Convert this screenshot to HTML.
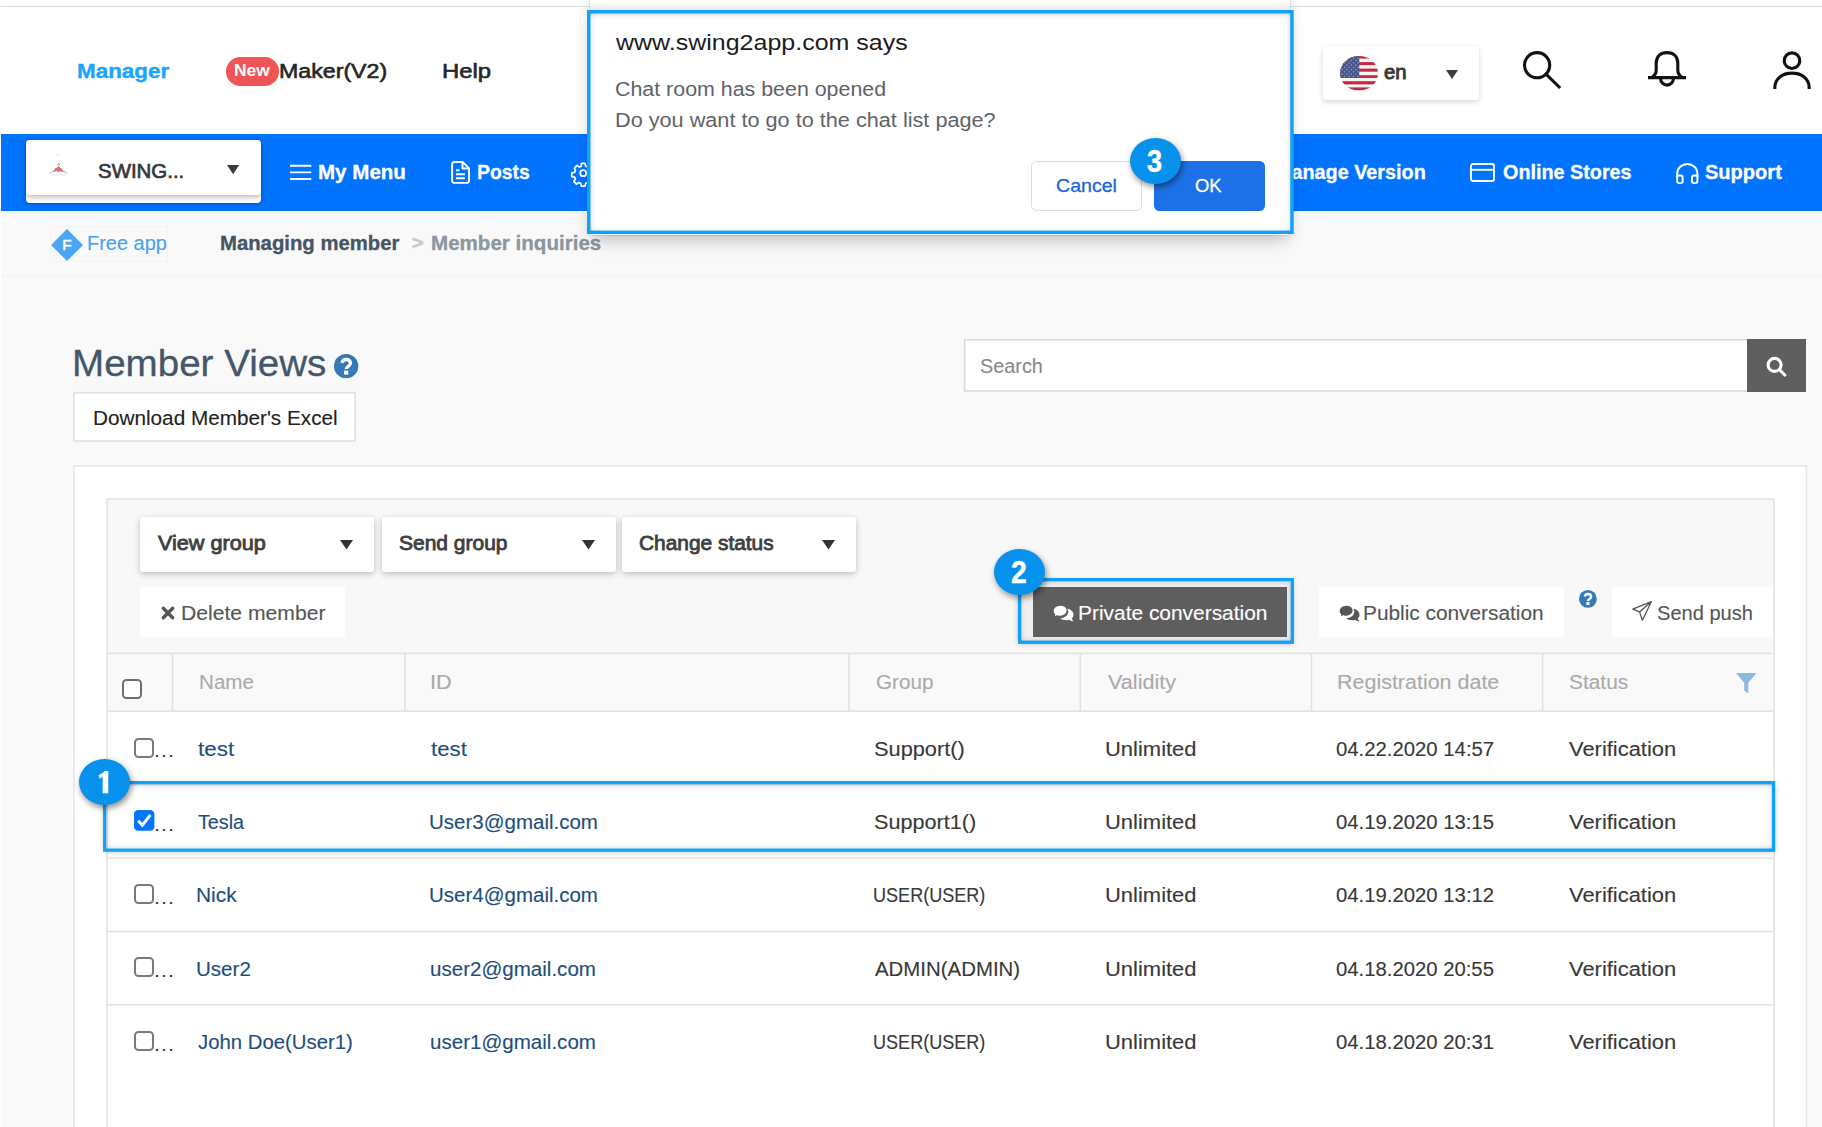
<!DOCTYPE html>
<html lang="en"><head><meta charset="utf-8"><title>Member Views</title>
<style>
html,body{margin:0;padding:0;}
html,body{width:1822px;height:1127px;overflow:hidden;background:#fff;}
body{position:relative;font-family:"Liberation Sans",sans-serif;}
.root{position:absolute;left:0;top:0;width:1822px;height:1127px;overflow:hidden;background:#fff;}
.t{position:absolute;white-space:nowrap;line-height:1;font-family:"Liberation Sans",sans-serif;}
.b{position:absolute;box-sizing:border-box;}
svg{position:absolute;overflow:visible;}
.sel{background:#fff;border-radius:3px;box-shadow:0 2px 6px rgba(0,0,0,.24);}
.badge{position:absolute;border-radius:50%;background:#0692ec;box-shadow:1.5px 3px 6px rgba(0,0,0,.45);}
</style></head><body><div class="root">
<div class="b" style="left:1px;top:6px;width:1821px;height:1px;background:#d8dee3;"></div>
<span class="t" style="left:77.04px;top:60.22px;font-size:21px;color:#1ea4fa;transform:scaleX(1.0680);transform-origin:0 0;font-weight:bold;-webkit-text-stroke:0.4px #1ea4fa;">Manager</span>
<div class="b" style="left:226px;top:57px;width:53px;height:28.5px;background:#f05454;border-radius:14.5px;"></div>
<span class="t" style="left:234.47px;top:62.23px;font-size:16.5px;color:#fff;transform:scaleX(1.0542);transform-origin:0 0;font-weight:bold;">New</span>
<span class="t" style="left:279.05px;top:60.75px;font-size:20.5px;color:#262626;transform:scaleX(1.1308);transform-origin:0 0;-webkit-text-stroke:0.6px #262626;">Maker(V2)</span>
<span class="t" style="left:441.89px;top:60.75px;font-size:20.5px;color:#262626;transform:scaleX(1.1647);transform-origin:0 0;-webkit-text-stroke:0.6px #262626;">Help</span>
<div class="b sel" style="left:1323px;top:46px;width:156px;height:53.5px;box-shadow:0 2px 5px rgba(0,0,0,.17);"></div>
<svg style="left:1340.1px;top:55.8px" width="38" height="34.6" viewBox="0 0 38 34.6"><defs><clipPath id="fc"><ellipse cx="19" cy="17.3" rx="19" ry="17.3"/></clipPath><pattern id="st" width="3.2" height="3.2" patternUnits="userSpaceOnUse" patternTransform="rotate(45)"><rect width="3.2" height="3.2" fill="#46558a"/><circle cx="1.6" cy="1.6" r=".75" fill="#9aa3c4"/></pattern></defs>
<g clip-path="url(#fc)"><rect width="38" height="34.6" fill="#f6f3f3"/>
<g fill="#c22a41"><rect y="0" width="38" height="2.6"/><rect y="6.1" width="38" height="3"/><rect y="12.6" width="38" height="3.1"/><rect y="19.2" width="38" height="2.8"/><rect y="25.2" width="38" height="3.2"/><rect y="31.4" width="38" height="3.2"/></g>
<rect width="19.3" height="21.8" fill="url(#st)"/></g></svg>
<span class="t" style="left:1383.79px;top:62.59px;font-size:19.5px;color:#383838;transform:scaleX(1.0409);transform-origin:0 0;-webkit-text-stroke:0.9px #383838;">en</span>
<svg style="left:1445.9px;top:70.1px" width="12" height="9" viewBox="0 0 12 9"><path d="M0 0h12L6 9z" fill="#3c3c3c"/></svg>
<svg style="left:1520px;top:48px" width="44" height="44" viewBox="0 0 44 44" fill="none" stroke="#111" stroke-width="3.1" stroke-linecap="butt"><circle cx="17.1" cy="17.2" r="12.6"/><path d="M26 26.1L40.2 40"/></svg>
<svg style="left:1646px;top:48px" width="44" height="44" viewBox="0 0 44 44" fill="none" stroke="#111" stroke-width="3.1" stroke-linejoin="round"><path d="M2 29.6H40"/><path d="M5.5 29.6C9 27.6 10.2 25.5 10.2 22V15.3C10.2 8.7 14.5 4.6 21 4.6S31.8 8.7 31.8 15.3V22C31.8 25.5 33 27.6 36.5 29.6"/><path d="M14.6 30.6a6.4 6.5 0 0 0 12.8 0"/></svg>
<svg style="left:1770px;top:48px" width="44" height="44" viewBox="0 0 44 44" fill="none" stroke="#111" stroke-width="3.1"><circle cx="22" cy="12.7" r="7.8"/><path d="M4.8 41v-1.300c0-8.500 7-14.600 17.200-14.600s17.200 6.100 17.200 14.600v1.300"/></svg>
<div class="b" style="left:1px;top:134px;width:1821px;height:76.6px;background:#0074ff;"></div>
<div class="b" style="left:26px;top:140px;width:235px;height:63px;background:#fff;border-radius:4px;box-shadow:0 1px 4px rgba(0,0,60,.3);"></div>
<div class="b" style="left:26px;top:140px;width:235px;height:54.5px;background:#fff;border-radius:4px;box-shadow:0 3px 4px rgba(0,0,0,.22);"></div>
<svg style="left:49px;top:153.800px" width="19" height="22" viewBox="0 0 19 22"><path d="M7 .7h4.500" stroke="#ddd" stroke-width=".6"/><path d="M8.600 11c-.3-1.300 1.500-1.900 1.900-.7.300 1-1 1.300-1.100 2.300" fill="none" stroke="#666" stroke-width=".7"/><g fill="#e9636d"><circle cx="7.300" cy="15.300" r="1.500"/><circle cx="9.600" cy="14" r="1.600"/><circle cx="11.700" cy="15.500" r="1.500"/><circle cx="9.500" cy="16.300" r="1.500"/><circle cx="5.600" cy="16.800" r="1"/><circle cx="13.300" cy="16.900" r="1"/></g><path d="M.8 19.200c2.200-1.700 5.400-2.300 8.700-2.300s6.500.6 8.700 2.300" fill="none" stroke="#9a9a9a" stroke-width=".8"/><path d="M1.500 20.600c2.600.5 13.400.5 16 0" fill="none" stroke="#cfcfcf" stroke-width=".7"/></svg>
<span class="t" style="left:98.08px;top:160.67px;font-size:20px;color:#383838;transform:scaleX(1.0220);transform-origin:0 0;-webkit-text-stroke:0.7px #383838;">SWING...</span>
<svg style="left:226.8px;top:165.1px" width="12.2" height="9.3" viewBox="0 0 12.2 9.3"><path d="M0 0h12.2L6.1 9.3z" fill="#3a3a3a"/></svg>
<svg style="left:289.5px;top:164px" width="22" height="17" viewBox="0 0 22 17" fill="none" stroke="#fff" stroke-width="1.9"><path d="M0 1.700h21.300M0 8.400h21.300M0 15h21.300"/></svg>
<span class="t" style="left:317.86px;top:162.07px;font-size:20px;color:#fff;transform:scaleX(1.0277);transform-origin:0 0;font-weight:bold;-webkit-text-stroke:0.3px #fff;">My Menu</span>
<svg style="left:450.7px;top:160.8px" width="19" height="23" viewBox="0 0 19 23" fill="none" stroke="#fff" stroke-width="1.9" stroke-linejoin="round"><path d="M3.300 1h8.400l6.300 6.300v12.400a2.200 2.200 0 0 1-2.200 2.200H3.300a2.200 2.200 0 0 1-2.200-2.200V3.200A2.200 2.200 0 0 1 3.300 1z"/><path d="M11.500 1.200v6.300h6.300"/><path d="M5 9.200h3.500M5 13.200h9M5 17.200h9"/></svg>
<span class="t" style="left:476.54px;top:162.07px;font-size:20px;color:#fff;transform:scaleX(0.9675);transform-origin:0 0;font-weight:bold;-webkit-text-stroke:0.3px #fff;">Posts</span>
<svg style="left:571.7px;top:161.6px" width="22.4" height="22.4" viewBox="0 0 24 24" fill="none" stroke="#fff" stroke-width="1.9" stroke-linejoin="round"><circle cx="12" cy="12" r="3.200"/><path d="M10 1.500h4l.6 3 2 .9 2.600-1.700 2.800 2.800-1.700 2.600.9 2 3 .6v4l-3 .6-.9 2 1.700 2.600-2.800 2.800-2.600-1.700-2 .9-.6 3h-4l-.6-3-2-.9-2.600 1.700-2.800-2.800 1.700-2.600-.9-2-3-.6v-4l3-.6.9-2L2.600 6.500l2.800-2.800L8 5.400l2-.9z"/></svg>
<span class="t" style="left:1275.39px;top:162.07px;font-size:20px;color:#fff;font-weight:bold;transform:scaleX(0.9901);transform-origin:0 0;-webkit-text-stroke:0.3px #fff;">Manage Version</span>
<svg style="left:1470.4px;top:162.5px" width="25" height="19" viewBox="0 0 25 19" fill="none" stroke="#fff" stroke-width="1.9"><rect x="1" y="1" width="23" height="17" rx="2"/><path d="M1 6.800h23"/></svg>
<span class="t" style="left:1503.21px;top:162.07px;font-size:20px;color:#fff;transform:scaleX(0.9891);transform-origin:0 0;font-weight:bold;-webkit-text-stroke:0.3px #fff;">Online Stores</span>
<svg style="left:1676px;top:163px" width="23" height="21" viewBox="0 0 23 21" fill="none" stroke="#fff" stroke-width="1.9" stroke-linejoin="round"><path d="M1.200 14.500v-4a10.100 9.500 0 0 1 20.200 0v4"/><path d="M1.200 12.500h3.600a1.800 1.800 0 0 1 1.800 1.800v4a1.800 1.800 0 0 1-1.800 1.800H3a1.800 1.800 0 0 1-1.800-1.800zM21.400 12.500h-3.600a1.800 1.800 0 0 0-1.800 1.800v4a1.800 1.800 0 0 0 1.800 1.800h1.800a1.800 1.800 0 0 0 1.800-1.800z"/></svg>
<span class="t" style="left:1705.40px;top:162.07px;font-size:20px;color:#fff;transform:scaleX(1.0026);transform-origin:0 0;font-weight:bold;-webkit-text-stroke:0.3px #fff;">Support</span>
<div class="b" style="left:1px;top:210.6px;width:1821px;height:916.4px;background:#f9f9f9;"></div>
<div class="b" style="left:1px;top:210.6px;width:1821px;height:65.4px;background:#f9f9f9;border-bottom:1px solid #f2f2f2;"></div>
<div class="b" style="left:50px;top:226px;width:118px;height:36px;border:1px solid #f3f3f3;"></div>
<svg style="left:51px;top:228.800px" width="32" height="32" viewBox="0 0 32 32"><path d="M16 0L32 16 16 32 0 16z" fill="#4aa6f4"/></svg>
<span class="t" style="left:62.16px;top:237.18px;font-size:15.5px;color:#fff;-webkit-text-stroke:0.6px #fff;">F</span>
<span class="t" style="left:87.10px;top:232.67px;font-size:20px;color:#49a2ef;transform:scaleX(0.9987);transform-origin:0 0;-webkit-text-stroke:0.12px #49a2ef;">Free app</span>
<span class="t" style="left:219.88px;top:232.67px;font-size:20px;color:#455563;transform:scaleX(1.0154);transform-origin:0 0;font-weight:bold;-webkit-text-stroke:0.3px #455563;">Managing member</span>
<span class="t" style="left:412.21px;top:235.19px;font-size:17.5px;color:#c4c8cb;transform:scaleX(1.1315);transform-origin:0 0;font-weight:bold;-webkit-text-stroke:0.5px #c4c8cb;">&gt;</span>
<span class="t" style="left:430.96px;top:232.67px;font-size:20px;color:#8b969e;transform:scaleX(1.0281);transform-origin:0 0;font-weight:bold;-webkit-text-stroke:0.3px #8b969e;">Member inquiries</span>
<span class="t" style="left:72.01px;top:345.50px;font-size:36.5px;color:#44576a;transform:scaleX(1.0566);transform-origin:0 0;-webkit-text-stroke:0.3px #44576a;">Member Views</span>
<svg style="left:334px;top:353.9px" width="24.3" height="24.3" viewBox="0 0 24.3 24.3"><circle cx="12.15" cy="12.15" r="12.15" fill="#337ab7"/><path d="M7.900 8.900C8.400 6.700 10 5.500 12.300 5.500c2.500 0 4.200 1.500 4.200 3.600 0 1.600-1 2.400-2.200 3.300-1.300.9-2 1.500-2 2.700" fill="none" stroke="#fff" stroke-width="3.300"/><rect x="10.100" y="16.500" width="4.200" height="4.100" fill="#fff"/></svg>
<svg style="left:72px;top:390px" width="286" height="53" viewBox="0 0 286 53"><rect x="2.00" y="2.80" width="281.20" height="48.20" fill="#fff" stroke="#e2e2e2" stroke-width="1.7"/></svg>
<span class="t" style="left:92.94px;top:407.65px;font-size:20.5px;color:#222;transform:scaleX(1.0108);transform-origin:0 0;-webkit-text-stroke:0.12px #222;">Download Member&#x27;s Excel</span>
<svg style="left:962px;top:337px" width="789" height="56" viewBox="0 0 789 56"><rect x="2.60" y="2.80" width="784.40" height="51.10" fill="#fff" stroke="#d2dae1" stroke-width="1.5"/></svg>
<span class="t" style="left:980.31px;top:356.07px;font-size:20px;color:#8a8a8a;transform:scaleX(0.9918);transform-origin:0 0;-webkit-text-stroke:0.12px #8a8a8a;">Search</span>
<div class="b" style="left:1747px;top:338.6px;width:59px;height:53.19999999999999px;background:#5e5e5e;"></div>
<svg style="left:1764px;top:354px" width="24" height="24" viewBox="0 0 24 24" fill="none" stroke="#fff" stroke-width="3.100" stroke-linecap="round"><circle cx="10.600" cy="10.900" r="6.500"/><path d="M15.800 16l5 5"/></svg>
<svg style="left:72px;top:464px" width="1737" height="678" viewBox="0 0 1737 678"><rect x="2.00" y="2.00" width="1732.40" height="674.00" fill="#fff" stroke="#e8e8e8" stroke-width="1.7"/></svg>
<svg style="left:105px;top:497px" width="1672" height="645" viewBox="0 0 1672 645"><rect x="2.20" y="2.10" width="1666.90" height="640.90" fill="#f8f8f8" stroke="#e4e4e4" stroke-width="1.7"/></svg>
<div class="b sel" style="left:140.3px;top:516.5px;width:234.2px;height:55.0px;"></div>
<span class="t" style="left:157.69px;top:532.87px;font-size:20px;color:#3e3e3e;transform:scaleX(1.0800);transform-origin:0 0;-webkit-text-stroke:0.8px #3e3e3e;">View group</span>
<svg style="left:340px;top:539.8px" width="13" height="9.5" viewBox="0 0 13 9.5"><path d="M0 0h13L6.5 9.5z" fill="#333"/></svg>
<div class="b sel" style="left:382.4px;top:516.5px;width:234.10000000000002px;height:55.0px;"></div>
<span class="t" style="left:398.86px;top:532.87px;font-size:20px;color:#3e3e3e;transform:scaleX(1.0492);transform-origin:0 0;-webkit-text-stroke:0.8px #3e3e3e;">Send group</span>
<svg style="left:582px;top:539.8px" width="13" height="9.5" viewBox="0 0 13 9.5"><path d="M0 0h13L6.5 9.5z" fill="#333"/></svg>
<div class="b sel" style="left:622px;top:516.5px;width:234px;height:55.0px;"></div>
<span class="t" style="left:638.76px;top:532.87px;font-size:20px;color:#3e3e3e;transform:scaleX(1.0440);transform-origin:0 0;-webkit-text-stroke:0.8px #3e3e3e;">Change status</span>
<svg style="left:821.5px;top:539.8px" width="13" height="9.5" viewBox="0 0 13 9.5"><path d="M0 0h13L6.5 9.5z" fill="#333"/></svg>
<div class="b" style="left:140.3px;top:587px;width:204.7px;height:50px;background:#fff;"></div>
<svg style="left:161px;top:606.400px" width="14" height="14" viewBox="0 0 14 14" stroke="#555" stroke-width="3.400" stroke-linecap="round"><path d="M2.300 2.300l9.400 9.400M11.700 2.300L2.300 11.700"/></svg>
<span class="t" style="left:180.51px;top:603.17px;font-size:20px;color:#555;transform:scaleX(1.0571);transform-origin:0 0;-webkit-text-stroke:0.12px #555;">Delete member</span>
<div class="b" style="left:1021px;top:581px;width:269.5px;height:60px;background:#efefef;"></div>
<div class="b" style="left:1032.8px;top:587px;width:254.20000000000005px;height:50px;background:#5e5e5e;"></div>
<svg style="left:1053.2px;top:605.2px" width="20.5" height="17" viewBox="0 0 21 16" preserveAspectRatio="none"><path d="M13.300 3.400c4.300.2 7.700 2.700 7.700 5.800 0 1.400-.7 2.600-1.800 3.600.4 1.100 1 1.900 1.700 2.400-1.600.1-3.200-.5-4.400-1.400-1 .3-2.100.5-3.300.5-2.300 0-4.400-.7-5.800-1.800 4.600-.2 8.300-2.900 8.300-6.400 0-.9-.5-1.900-2.400-2.700z" fill="#fff"/><path d="M7.300 0C3.300 0 0 2.500 0 5.600c0 1.400.7 2.600 1.700 3.600-.3 1-.9 1.800-1.600 2.300 1.500.1 3.100-.5 4.200-1.300 1 .3 1.900.500 3 .5 4 0 7.300-2.500 7.300-5.600S11.300 0 7.300 0z" fill="#fff" stroke="#5e5e5e" stroke-width="1.300"/></svg>
<span class="t" style="left:1078.43px;top:603.17px;font-size:20px;color:#fff;transform:scaleX(1.0454);transform-origin:0 0;-webkit-text-stroke:0.12px #fff;">Private conversation</span>
<div class="b" style="left:1019.15px;top:579.55px;width:272.70px;height:62.60px;box-shadow:inset 0 0 6px rgba(60,45,30,.34),0 1px 6px rgba(0,0,0,.34);"></div>
<svg style="left:1017.50px;top:577.90px" width="276.00" height="65.90" viewBox="0 0 276.00 65.90"><rect x="1.650" y="1.650" width="272.70" height="62.60" fill="none" stroke="#0ea2fb" stroke-width="3.3"/></svg>
<div class="b" style="left:1318.6px;top:587px;width:245.60000000000014px;height:50px;background:#fff;"></div>
<svg style="left:1339.0px;top:605.2px" width="20.5" height="17" viewBox="0 0 21 16" preserveAspectRatio="none"><path d="M13.300 3.400c4.300.2 7.700 2.700 7.700 5.800 0 1.400-.7 2.600-1.800 3.600.4 1.100 1 1.900 1.700 2.400-1.600.1-3.200-.5-4.400-1.400-1 .3-2.100.5-3.300.5-2.300 0-4.400-.7-5.800-1.800 4.600-.2 8.300-2.900 8.300-6.400 0-.9-.5-1.900-2.400-2.700z" fill="#555"/><path d="M7.300 0C3.300 0 0 2.500 0 5.600c0 1.400.7 2.600 1.700 3.600-.3 1-.9 1.800-1.600 2.300 1.500.1 3.100-.5 4.200-1.300 1 .3 1.900.500 3 .5 4 0 7.300-2.500 7.300-5.600S11.300 0 7.300 0z" fill="#555" stroke="#fff" stroke-width="1.300"/></svg>
<span class="t" style="left:1363.43px;top:603.17px;font-size:20px;color:#555;transform:scaleX(1.0416);transform-origin:0 0;-webkit-text-stroke:0.12px #555;">Public conversation</span>
<svg style="left:1578.8px;top:589.8px" width="17.8" height="17.8" viewBox="0 0 24.3 24.3"><circle cx="12.15" cy="12.15" r="12.15" fill="#337ab7"/><path d="M7.900 8.900C8.400 6.700 10 5.500 12.300 5.500c2.500 0 4.200 1.500 4.200 3.600 0 1.600-1 2.400-2.200 3.300-1.300.9-2 1.500-2 2.700" fill="none" stroke="#fff" stroke-width="3.300"/><rect x="10.100" y="16.500" width="4.200" height="4.100" fill="#fff"/></svg>
<div class="b" style="left:1612.3px;top:587px;width:161.20000000000005px;height:50px;background:#fff;"></div>
<svg style="left:1632.400px;top:601px" width="20" height="20" viewBox="0 0 20 20" fill="none" stroke="#555" stroke-width="1.300" stroke-linejoin="round"><path d="M19.300.7L.8 8.200l6.700 2.700 2.900 8.300zM19.300.7L7.500 10.900"/></svg>
<span class="t" style="left:1657.30px;top:603.17px;font-size:20px;color:#555;transform:scaleX(1.0032);transform-origin:0 0;-webkit-text-stroke:0.12px #555;">Send push</span>
<div class="b" style="left:108px;top:653.4px;width:1665.3px;height:57.80000000000007px;background:#f9f9f9;"></div>
<div class="b" style="left:108px;top:711.2px;width:1665.3px;height:415.79999999999995px;background:#fff;"></div>
<svg style="left:107px;top:651px" width="1668" height="5" viewBox="0 0 1668 5"><rect x="1.00" y="1.65" width="1665.30" height="1.50" fill="#e1e1e1"/></svg>
<svg style="left:107px;top:709px" width="1668" height="4" viewBox="0 0 1668 4"><rect x="1.00" y="1.45" width="1665.30" height="1.50" fill="#e1e1e1"/></svg>
<svg style="left:170px;top:652px" width="5" height="61" viewBox="0 0 5 61"><rect x="1.75" y="1.40" width="1.50" height="57.80" fill="#e1e1e1"/></svg>
<svg style="left:403px;top:652px" width="4" height="61" viewBox="0 0 4 61"><rect x="1.25" y="1.40" width="1.50" height="57.80" fill="#e1e1e1"/></svg>
<svg style="left:847px;top:652px" width="4" height="61" viewBox="0 0 4 61"><rect x="1.25" y="1.40" width="1.50" height="57.80" fill="#e1e1e1"/></svg>
<svg style="left:1078px;top:652px" width="5" height="61" viewBox="0 0 5 61"><rect x="1.55" y="1.40" width="1.50" height="57.80" fill="#e1e1e1"/></svg>
<svg style="left:1309px;top:652px" width="5" height="61" viewBox="0 0 5 61"><rect x="1.75" y="1.40" width="1.50" height="57.80" fill="#e1e1e1"/></svg>
<svg style="left:1540px;top:652px" width="5" height="61" viewBox="0 0 5 61"><rect x="1.95" y="1.40" width="1.50" height="57.80" fill="#e1e1e1"/></svg>
<div class="b" style="left:121.500px;top:679.300px;width:20.300px;height:20.200px;background:#fff;border:2px solid #6e6e6e;border-radius:4.500px;"></div>
<span class="t" style="left:198.55px;top:671.87px;font-size:20px;color:#aaa;transform:scaleX(1.0315);transform-origin:0 0;-webkit-text-stroke:0.12px #aaa;">Name</span>
<span class="t" style="left:430.04px;top:671.87px;font-size:20px;color:#aaa;transform:scaleX(1.0867);transform-origin:0 0;-webkit-text-stroke:0.12px #aaa;">ID</span>
<span class="t" style="left:875.57px;top:671.87px;font-size:20px;color:#aaa;transform:scaleX(1.0335);transform-origin:0 0;-webkit-text-stroke:0.12px #aaa;">Group</span>
<span class="t" style="left:1107.89px;top:671.87px;font-size:20px;color:#aaa;transform:scaleX(1.0811);transform-origin:0 0;-webkit-text-stroke:0.12px #aaa;">Validity</span>
<span class="t" style="left:1336.98px;top:671.87px;font-size:20px;color:#aaa;transform:scaleX(1.0733);transform-origin:0 0;-webkit-text-stroke:0.12px #aaa;">Registration date</span>
<span class="t" style="left:1569.06px;top:671.87px;font-size:20px;color:#aaa;transform:scaleX(1.0436);transform-origin:0 0;-webkit-text-stroke:0.12px #aaa;">Status</span>
<svg style="left:1736px;top:672.600px" width="20.500" height="20.500" viewBox="0 0 20.500 20.500"><path d="M0 0h20.500L12.300 9.800v10.700L8.200 17.500V9.800z" fill="#8db8e2"/></svg>
<div class="b" style="left:134.3px;top:737.5px;width:20px;height:20px;background:#fff;border:2px solid #7a7a7a;border-radius:4.500px;"></div>
<span class="t" style="left:154.58px;top:742.46px;font-size:18px;color:#222;letter-spacing:2.000px;-webkit-text-stroke:0.12px #222;">...</span>
<span class="t" style="left:197.66px;top:738.87px;font-size:20px;color:#1d4e7c;transform:scaleX(1.1226);transform-origin:0 0;-webkit-text-stroke:0.12px #1d4e7c;">test</span>
<span class="t" style="left:430.67px;top:738.87px;font-size:20px;color:#1d4e7c;transform:scaleX(1.1132);transform-origin:0 0;-webkit-text-stroke:0.12px #1d4e7c;">test</span>
<span class="t" style="left:873.52px;top:738.87px;font-size:20px;color:#383838;transform:scaleX(1.0887);transform-origin:0 0;-webkit-text-stroke:0.12px #383838;">Support()</span>
<span class="t" style="left:1104.55px;top:738.87px;font-size:20px;color:#383838;transform:scaleX(1.0981);transform-origin:0 0;-webkit-text-stroke:0.12px #383838;">Unlimited</span>
<span class="t" style="left:1336.09px;top:738.87px;font-size:20px;color:#383838;transform:scaleX(1.0156);transform-origin:0 0;-webkit-text-stroke:0.12px #383838;">04.22.2020 14:57</span>
<span class="t" style="left:1568.59px;top:738.87px;font-size:20px;color:#383838;transform:scaleX(1.0954);transform-origin:0 0;-webkit-text-stroke:0.12px #383838;">Verification</span>
<svg style="left:107px;top:783px" width="1668" height="4" viewBox="0 0 1668 4"><rect x="1.00" y="1.15" width="1665.30" height="1.50" fill="#e3e3e3"/></svg>
<svg style="left:134.0px;top:810.20px" width="20.4" height="20.7" viewBox="0 0 20.4 20.7"><rect width="20.4" height="20.7" rx="4.3" fill="#0075ff"/><path d="M4.2 10.700l4.200 4.500 8-10.300" fill="none" stroke="#fff" stroke-width="3" stroke-linecap="butt" stroke-linejoin="miter"/></svg>
<span class="t" style="left:154.58px;top:815.76px;font-size:18px;color:#222;letter-spacing:2.000px;-webkit-text-stroke:0.12px #222;">...</span>
<span class="t" style="left:197.61px;top:812.17px;font-size:20px;color:#1d4e7c;transform:scaleX(0.9870);transform-origin:0 0;-webkit-text-stroke:0.12px #1d4e7c;">Tesla</span>
<span class="t" style="left:429.46px;top:812.17px;font-size:20px;color:#1d4e7c;transform:scaleX(1.0253);transform-origin:0 0;-webkit-text-stroke:0.12px #1d4e7c;">User3@gmail.com</span>
<span class="t" style="left:873.53px;top:812.17px;font-size:20px;color:#383838;transform:scaleX(1.0802);transform-origin:0 0;-webkit-text-stroke:0.12px #383838;">Support1()</span>
<span class="t" style="left:1104.55px;top:812.17px;font-size:20px;color:#383838;transform:scaleX(1.0981);transform-origin:0 0;-webkit-text-stroke:0.12px #383838;">Unlimited</span>
<span class="t" style="left:1336.09px;top:812.17px;font-size:20px;color:#383838;transform:scaleX(1.0143);transform-origin:0 0;-webkit-text-stroke:0.12px #383838;">04.19.2020 13:15</span>
<span class="t" style="left:1568.59px;top:812.17px;font-size:20px;color:#383838;transform:scaleX(1.0954);transform-origin:0 0;-webkit-text-stroke:0.12px #383838;">Verification</span>
<svg style="left:107px;top:856px" width="1668" height="4" viewBox="0 0 1668 4"><rect x="1.00" y="1.45" width="1665.30" height="1.50" fill="#e3e3e3"/></svg>
<div class="b" style="left:134.3px;top:884.1px;width:20px;height:20px;background:#fff;border:2px solid #7a7a7a;border-radius:4.500px;"></div>
<span class="t" style="left:154.58px;top:889.06px;font-size:18px;color:#222;letter-spacing:2.000px;-webkit-text-stroke:0.12px #222;">...</span>
<span class="t" style="left:196.33px;top:885.47px;font-size:20px;color:#1d4e7c;transform:scaleX(1.0456);transform-origin:0 0;-webkit-text-stroke:0.12px #1d4e7c;">Nick</span>
<span class="t" style="left:429.46px;top:885.47px;font-size:20px;color:#1d4e7c;transform:scaleX(1.0253);transform-origin:0 0;-webkit-text-stroke:0.12px #1d4e7c;">User4@gmail.com</span>
<span class="t" style="left:873.15px;top:885.47px;font-size:20px;color:#383838;transform:scaleX(0.9030);transform-origin:0 0;-webkit-text-stroke:0.12px #383838;">USER(USER)</span>
<span class="t" style="left:1104.55px;top:885.47px;font-size:20px;color:#383838;transform:scaleX(1.0981);transform-origin:0 0;-webkit-text-stroke:0.12px #383838;">Unlimited</span>
<span class="t" style="left:1336.09px;top:885.47px;font-size:20px;color:#383838;transform:scaleX(1.0156);transform-origin:0 0;-webkit-text-stroke:0.12px #383838;">04.19.2020 13:12</span>
<span class="t" style="left:1568.59px;top:885.47px;font-size:20px;color:#383838;transform:scaleX(1.0954);transform-origin:0 0;-webkit-text-stroke:0.12px #383838;">Verification</span>
<svg style="left:107px;top:929px" width="1668" height="5" viewBox="0 0 1668 5"><rect x="1.00" y="1.75" width="1665.30" height="1.50" fill="#e3e3e3"/></svg>
<div class="b" style="left:134.3px;top:957.4px;width:20px;height:20px;background:#fff;border:2px solid #7a7a7a;border-radius:4.500px;"></div>
<span class="t" style="left:154.58px;top:962.36px;font-size:18px;color:#222;letter-spacing:2.000px;-webkit-text-stroke:0.12px #222;">...</span>
<span class="t" style="left:196.46px;top:958.77px;font-size:20px;color:#1d4e7c;transform:scaleX(1.0276);transform-origin:0 0;-webkit-text-stroke:0.12px #1d4e7c;">User2</span>
<span class="t" style="left:429.66px;top:958.77px;font-size:20px;color:#1d4e7c;transform:scaleX(1.0277);transform-origin:0 0;-webkit-text-stroke:0.12px #1d4e7c;">user2@gmail.com</span>
<span class="t" style="left:874.50px;top:958.77px;font-size:20px;color:#383838;transform:scaleX(1.0206);transform-origin:0 0;-webkit-text-stroke:0.12px #383838;">ADMIN(ADMIN)</span>
<span class="t" style="left:1104.55px;top:958.77px;font-size:20px;color:#383838;transform:scaleX(1.0981);transform-origin:0 0;-webkit-text-stroke:0.12px #383838;">Unlimited</span>
<span class="t" style="left:1336.09px;top:958.77px;font-size:20px;color:#383838;transform:scaleX(1.0143);transform-origin:0 0;-webkit-text-stroke:0.12px #383838;">04.18.2020 20:55</span>
<span class="t" style="left:1568.59px;top:958.77px;font-size:20px;color:#383838;transform:scaleX(1.0954);transform-origin:0 0;-webkit-text-stroke:0.12px #383838;">Verification</span>
<svg style="left:107px;top:1003px" width="1668" height="4" viewBox="0 0 1668 4"><rect x="1.00" y="1.05" width="1665.30" height="1.50" fill="#e3e3e3"/></svg>
<div class="b" style="left:134.3px;top:1030.7px;width:20px;height:20px;background:#fff;border:2px solid #7a7a7a;border-radius:4.500px;"></div>
<span class="t" style="left:154.58px;top:1035.66px;font-size:18px;color:#222;letter-spacing:2.000px;-webkit-text-stroke:0.12px #222;">...</span>
<span class="t" style="left:197.70px;top:1032.07px;font-size:20px;color:#1d4e7c;transform:scaleX(1.0166);transform-origin:0 0;-webkit-text-stroke:0.12px #1d4e7c;">John Doe(User1)</span>
<span class="t" style="left:429.66px;top:1032.07px;font-size:20px;color:#1d4e7c;transform:scaleX(1.0277);transform-origin:0 0;-webkit-text-stroke:0.12px #1d4e7c;">user1@gmail.com</span>
<span class="t" style="left:873.15px;top:1032.07px;font-size:20px;color:#383838;transform:scaleX(0.9030);transform-origin:0 0;-webkit-text-stroke:0.12px #383838;">USER(USER)</span>
<span class="t" style="left:1104.55px;top:1032.07px;font-size:20px;color:#383838;transform:scaleX(1.0981);transform-origin:0 0;-webkit-text-stroke:0.12px #383838;">Unlimited</span>
<span class="t" style="left:1336.09px;top:1032.07px;font-size:20px;color:#383838;transform:scaleX(1.0149);transform-origin:0 0;-webkit-text-stroke:0.12px #383838;">04.18.2020 20:31</span>
<span class="t" style="left:1568.59px;top:1032.07px;font-size:20px;color:#383838;transform:scaleX(1.0954);transform-origin:0 0;-webkit-text-stroke:0.12px #383838;">Verification</span>
<div class="b" style="left:104.83px;top:782.73px;width:1668.95px;height:67.55px;box-shadow:inset 0 0 7px rgba(60,45,30,.36),0 1px 6px rgba(0,0,0,.34);"></div>
<svg style="left:103.20px;top:781.10px" width="1672.20" height="70.80" viewBox="0 0 1672.20 70.80"><rect x="1.625" y="1.625" width="1668.95" height="67.55" fill="none" stroke="#0ea2fb" stroke-width="3.25"/></svg>
<div class="b" style="left:589.6px;top:0px;width:700.6999999999999px;height:235.2px;background:linear-gradient(to bottom,#fff 0,#fbfbfb 3px,#e9e9e9 10px,#fff 10.5px);border-radius:0 0 3px 3px;box-shadow:0 11px 20px -5px rgba(0,0,0,.13),0 3px 14px rgba(0,0,0,.15),0 0 1.5px rgba(0,0,0,.35);"></div>
<div class="b" style="left:588.93px;top:11.72px;width:703.25px;height:220.60px;background:#fff;box-shadow:inset 0 1px 6px rgba(60,45,30,.38);"></div>
<svg style="left:587.20px;top:10.00px" width="706.70" height="224.05" viewBox="0 0 706.70 224.05"><rect x="1.725" y="1.725" width="703.25" height="220.60" fill="none" stroke="#0ea2fb" stroke-width="3.45"/></svg>
<span class="t" style="left:616.20px;top:32.35px;font-size:22.5px;color:#1b1b1d;transform:scaleX(1.1108);transform-origin:0 0;">www.swing2app.com says</span>
<span class="t" style="left:615.33px;top:78.87px;font-size:20px;color:#5f6368;transform:scaleX(1.0693);transform-origin:0 0;">Chat room has been opened</span>
<span class="t" style="left:615.27px;top:110.07px;font-size:20px;color:#5f6368;transform:scaleX(1.0834);transform-origin:0 0;">Do you want to go to the chat list page?</span>
<div class="b" style="left:1031.3px;top:160.6px;width:110.60000000000014px;height:50.0px;background:#fff;border:1.300px solid #dadce0;border-radius:5.500px;"></div>
<span class="t" style="left:1055.82px;top:176.74px;font-size:18.5px;color:#1a67d9;transform:scaleX(1.0576);transform-origin:0 0;-webkit-text-stroke:0.3px #1a67d9;">Cancel</span>
<div class="b" style="left:1154.2px;top:160.6px;width:111.0px;height:50.0px;background:#1d71e8;border-radius:5.500px;"></div>
<span class="t" style="left:1194.87px;top:176.74px;font-size:18.5px;color:#fff;transform:scaleX(0.9955);transform-origin:0 0;-webkit-text-stroke:0.3px #fff;">OK</span>
<div class="badge" style="left:79.4px;top:759.0px;width:51px;height:46px;"></div>
<svg style="left:97.70px;top:770.90px" width="10.3" height="22.3" viewBox="0 0 10.3 22.3"><path d="M10.3 0H6.700C5.300 1.600 3 3.200 .6 4.200L1.600 7.700C2.700 7.200 3.900 6.500 4.700 5.800V22.300H10.300z" fill="#fff"/></svg>
<div class="badge" style="left:993.8px;top:548.9px;width:51px;height:46px;"></div>
<span class="t" style="left:1011.01px;top:556.12px;font-size:32px;color:#fff;transform:scaleX(0.8854);transform-origin:0 0;font-weight:bold;-webkit-text-stroke:0.5px #fff;">2</span>
<div class="badge" style="left:1129.7px;top:137.9px;width:51px;height:46px;"></div>
<span class="t" style="left:1147.32px;top:145.12px;font-size:32px;color:#fff;transform:scaleX(0.8460);transform-origin:0 0;font-weight:bold;-webkit-text-stroke:0.5px #fff;">3</span>
</div></body></html>
